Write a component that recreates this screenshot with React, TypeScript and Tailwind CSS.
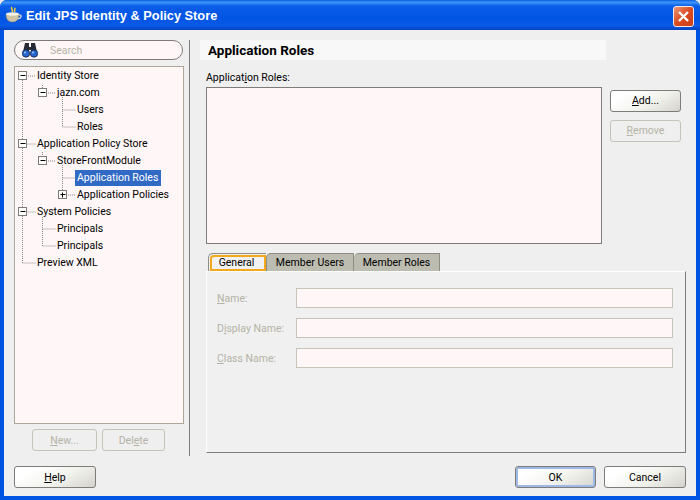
import React from 'react';

const FONT = "font-['Roboto','Noto_Sans',sans-serif]";

function CoffeeIcon() {
  return (
    <svg width="18" height="18" viewBox="0 0 18 18">
      <path d="M7 1c-2 2 2 3 0 5M9.5 2c1.5 1-1 2 .5 4" fill="none" stroke="#f6c93a" strokeWidth="1.6" />
      <path d="M1 8c3 1.500 10 1.500 13 0 0 5-2 8-6.500 8S1 13 1 8z" fill="#cfc4a8" stroke="#8f8468" strokeWidth="0.5" />
      <ellipse cx="7.500" cy="8" rx="6.500" ry="1.800" fill="#f7f2e4" />
      <path d="M14 9c3-.5 3 3-1 4" fill="none" stroke="#e8e0cc" strokeWidth="1.200" />
    </svg>
  );
}

function CloseIcon() {
  return (
    <div className="mt-[2px] flex h-[21px] w-[21px] items-center justify-center rounded-[3px] border border-[#f5e8e0] bg-[linear-gradient(135deg,#ea9a78,#dc4a20_50%,#c8401a)]">
      <svg width="13" height="13" viewBox="0 0 13 13">
        <path d="M2 2l9 9M11 2l-9 9" stroke="#fff" strokeWidth="2.400" />
      </svg>
    </div>
  );
}

function Binoculars() {
  return (
    <svg width="16" height="15" viewBox="0 0 16 15">
      <path d="M3 0h4v4h2V0h4l2 9H9V7H7v2H1z" fill="#262a34" />
      <circle cx="4" cy="10.500" r="3.700" fill="#2766cf" stroke="#10203e" strokeWidth="0.800" />
      <circle cx="12" cy="10.500" r="3.700" fill="#2766cf" stroke="#10203e" strokeWidth="0.800" />
      <circle cx="3" cy="9.500" r="1" fill="#9cc9f8" />
      <circle cx="11" cy="9.500" r="1" fill="#9cc9f8" />
    </svg>
  );
}

function Btn({ children, disabled, primary, className }: { children: React.ReactNode; disabled?: boolean; primary?: boolean; className: string }) {
  if (disabled) {
    return (
      <div className={`flex h-[22px] items-center justify-center rounded-[3px] border border-[#c5c4b8] pt-[2px] text-[#b4b3a6] ${className}`}>
        {children}
      </div>
    );
  }
  return (
    <div className={`flex h-[22px] items-center justify-center rounded-[3px] border border-[#7f7b78] bg-[linear-gradient(150deg,#ffffff_20%,#f1f1ec_60%,#d4d3cc)] pt-[2px] text-black ${primary ? 'shadow-[inset_0_0_0_2px_#9db9e8]' : ''} ${className}`}>
      {children}
    </div>
  );
}

const treeRows = [
  { label: 'Identity Store', x: 37 },
  { label: 'jazn.com', x: 57 },
  { label: 'Users', x: 77 },
  { label: 'Roles', x: 77 },
  { label: 'Application Policy Store', x: 37 },
  { label: 'StoreFrontModule', x: 57 },
  { label: 'Application Roles', x: 77, selected: true },
  { label: 'Application Policies', x: 77 },
  { label: 'System Policies', x: 37 },
  { label: 'Principals', x: 57 },
  { label: 'Principals', x: 57 },
  { label: 'Preview XML', x: 37 },
];

// dotted connectors and expander boxes, coordinates relative to the tree panel
function TreeLines() {
  const dots = '1 1';
  const lines = [
    'M7.5 13V196H21',
    'M13 9H21',
    'M27.5 18V22',
    'M33 26H41',
    'M47.5 30V60H61',
    'M47.5 43H61',
    'M7.5 77H21',
    'M27.5 85V89',
    'M33 94H41',
    'M47.5 98V124',
    'M47.5 111H61',
    'M53 128H61',
    'M7.5 145H21',
    'M27.5 150V179H41',
    'M27.5 162H41',
  ];
  const boxes = [[4, 5, 0], [24, 22, 0], [4, 73, 0], [24, 90, 0], [44, 124, 1], [4, 141, 0]];
  return (
    <svg className="absolute left-0 top-0" width="60" height="210" viewBox="0 0 60 210" style={{ overflow: 'visible' }}>
      {lines.map((d, i) => (
        <path key={i} d={d} fill="none" stroke="#8a8880" strokeDasharray={dots} />
      ))}
      {boxes.map(([x, y, plus], i) => (
        <g key={i}>
          <rect x={x - 0.5} y={y - 0.5} width="8" height="8" fill="#fff" stroke="#7f7b78" />
          <path d={plus ? `M${x + 1.5} ${y + 3.5}h5M${x + 3.5} ${y + 1.5}v5` : `M${x + 1.5} ${y + 3.5}h5`} stroke="#000" />
        </g>
      ))}
    </svg>
  );
}

function Field({ label, underline }: { label: string; underline: number }) {
  return (
    <div className="flex h-5 items-center">
      <span className="w-[79px] pt-[3px] text-[#b4b3a6]">
        {label.slice(0, underline)}
        <u>{label[underline]}</u>
        {label.slice(underline + 1)}
      </span>
      <div className="h-5 flex-1 border border-[#c5c4b8] bg-[#fff7f7]" />
    </div>
  );
}

export default function App() {
  return (
    <div className="h-[500px] w-[700px] bg-[#e8e8e8]">
      <div className={`${FONT} flex h-[500px] w-[700px] flex-col overflow-hidden rounded-t-[7px] bg-[#0054e3] text-[10.5px] leading-none text-black`}>
        <div className="flex h-[30px] items-center bg-[linear-gradient(180deg,#0a5fe0,#3e95fb_8%,#0a5de8_20%,#0054e3_60%,#0a5ae8_85%,#0043c0)] pl-[5px] pr-[6px]">
          <CoffeeIcon />
          <span className="ml-[3px] pt-[3px] font-['Liberation_Sans',sans-serif] text-[12.8px] font-bold text-white">Edit JPS Identity &amp; Policy Store</span>
          <div className="flex-1" />
          <CloseIcon />
        </div>

        <div className="mx-[4px] mb-[4px] flex flex-1 flex-col bg-[#efefef]">
          <div className="flex h-[426px] pt-[10px]">
            {/* left column */}
            <div className="ml-[10px] flex w-[170px] flex-col">
              <div className="flex h-5 w-[169px] items-center rounded-[10px] border border-[#7f7b78] bg-[#fff7f7] pl-[7px]">
                <Binoculars />
                <span className="ml-[12px] pt-[2px] text-[#b4b3a6]">Search</span>
              </div>
              <div className="relative mt-[6px] h-[358px] border border-[#aca899] bg-[#fff7f7]">
                <TreeLines />
                {treeRows.map((r, i) => (
                  <div key={i} className="flex h-[17px] items-center" style={{ paddingLeft: r.x - 15 - (r.selected ? 2 : 0) }}>
                    {r.selected ? (
                      <span className="flex h-4 items-center bg-[#316ac5] pl-[2px] pr-[3px] pt-[2px] text-white">{r.label}</span>
                    ) : (
                      <span className="pt-[2px]">{r.label}</span>
                    )}
                  </div>
                ))}
              </div>
              <div className="mt-[5px] flex pl-[18px]">
                <Btn disabled className="w-[65px]"><span><u>N</u>ew...</span></Btn>
                <Btn disabled className="ml-[5px] w-[63px]"><span>Del<u>e</u>te</span></Btn>
              </div>
            </div>

            {/* splitter */}
            <div className="ml-[5px] h-[416px] w-px bg-[#7f7b78]" />

            {/* right column */}
            <div className="ml-[11px] flex flex-1 flex-col">
              <div className="-ml-px flex h-5 w-[406px] items-center bg-[#f8f8f8] pl-[8px] pt-[2px] text-[13.5px] font-bold">Application Roles</div>
              <div className="ml-[5px] mt-[12px] pt-px">Applicat<u>i</u>on Roles:</div>
              <div className="ml-[5px] mt-[3px] flex">
                <div className="h-[157px] w-[396px] border border-[#7f7b78] bg-[#fff7f7]" />
                <div className="ml-[8px] mt-[3px] flex flex-col gap-2">
                  <Btn className="w-[71px]"><span><u>A</u>dd...</span></Btn>
                  <Btn disabled className="w-[71px]"><span><u>R</u>emove</span></Btn>
                </div>
              </div>

              <div className="ml-[7px] mt-[9px] flex h-[18px] items-end">
                <div className="h-[18px] w-[58px] rounded-tl-[5px] border-l border-t border-[#8f8d84] pl-px pt-px">
                  <div className="flex h-[16px] items-center justify-center rounded-tl-[4px] border-2 border-[#f4a81c] bg-[#f2f2f2] pr-[3px] pt-[1px]">General</div>
                </div>
                <div className="flex h-[18px] w-[88px] items-center justify-center rounded-tl-[5px] border-l border-r border-t border-[#8f8d84] bg-[#bdbcb1] pt-[2px]">Member Users</div>
                <div className="flex h-[18px] w-[86px] items-center justify-center rounded-tl-[5px] border-r border-t border-[#8f8d84] bg-[#bdbcb1] pt-[2px]">Member Roles</div>
              </div>
              <div className="ml-[5px] flex h-[182px] w-[480px] flex-col gap-[10px] border border-b-[#7f7b78] border-l-white border-r-[#7f7b78] border-t-white bg-[#f0f0f0] pl-[10px] pr-[12px] pt-[16px]">
                <Field label="Name:" underline={0} />
                <Field label="Display Name:" underline={1} />
                <Field label="Class Name:" underline={0} />
              </div>
            </div>
          </div>

          <div className="mt-[10px] flex pl-[10px] pr-[10px]">
            <Btn className="w-[82px]"><span><u>H</u>elp</span></Btn>
            <div className="flex-1" />
            <Btn primary className="w-[81px]">OK</Btn>
            <Btn className="ml-[8px] w-[82px]">Cancel</Btn>
          </div>
        </div>
      </div>
    </div>
  );
}
